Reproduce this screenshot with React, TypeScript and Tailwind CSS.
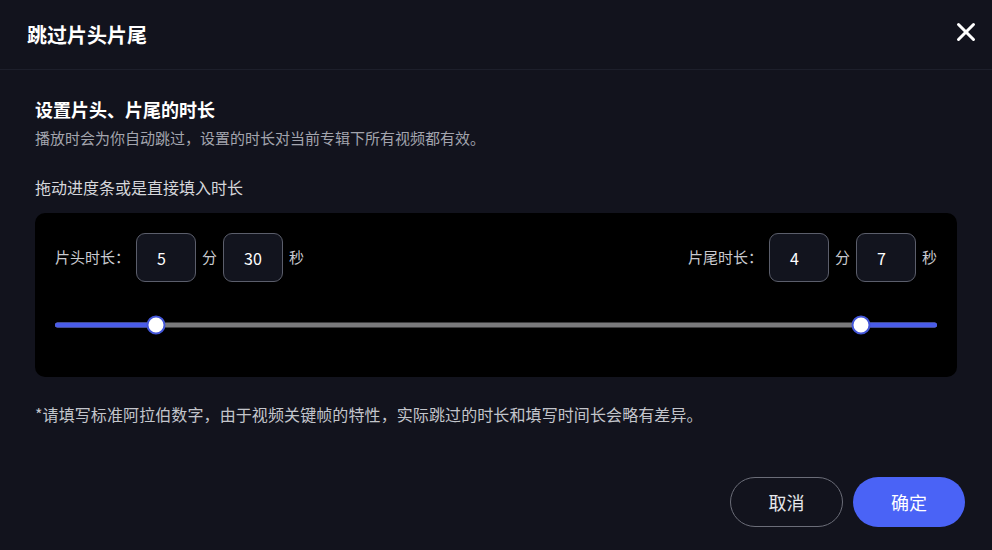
import { X } from "lucide-react";

const TOTAL_SECONDS = 2880;

interface TimeInputProps {
  label: string;
  minutes: number;
  seconds: number;
}

function TimeInput({ label, minutes, seconds }: TimeInputProps) {
  return (
    <div className="flex items-center gap-[6px] text-[15px] text-[#c9cacf]">
      <span>{label}</span>
      <div className="flex h-[49px] w-[60px] items-center rounded-[9px] border border-[#5b5e6b] bg-[#12141e] pl-5 text-[16px] text-white">
        {minutes}
      </div>
      <span>分</span>
      <div className="flex h-[49px] w-[60px] items-center rounded-[9px] border border-[#5b5e6b] bg-[#12141e] pl-5 text-[16px] text-white">
        {seconds}
      </div>
      <span>秒</span>
    </div>
  );
}

export default function App() {
  const head = 5 * 60 + 30;
  const tail = 4 * 60 + 7;
  const headPct = (head / TOTAL_SECONDS) * 100;
  const tailPct = 100 - (tail / TOTAL_SECONDS) * 100;

  return (
    <div
      className="flex h-[550px] w-full flex-col bg-[#12131d]"
      style={{ fontFamily: '"Noto Sans CJK SC", "Noto Sans", sans-serif' }}
    >
      {/* header */}
      <div className="flex h-[70px] shrink-0 items-center justify-between border-b border-[#1d1f2b] pl-[27px] pr-[11px]">
        <h1 className="text-[20px] font-bold text-white">跳过片头片尾</h1>
        <X className="-mt-[6px] h-[30px] w-[30px] text-white" strokeWidth={2.4} />
      </div>

      <div className="flex flex-1 flex-col px-[35px]">
        <h2 className="mt-[27px] text-[18px] leading-6 font-bold text-white">设置片头、片尾的时长</h2>
        <p className="mt-[7px] text-[15px] leading-5 text-[#a3a5ae]">
          播放时会为你自动跳过，设置的时长对当前专辑下所有视频都有效。
        </p>
        <p className="mt-[28px] text-[16px] leading-[22px] text-[#d6d7db]">拖动进度条或是直接填入时长</p>

        <div className="mt-[15px] flex h-[164px] flex-col rounded-[10px] bg-black px-5 pt-5">
          <div className="flex items-center justify-between">
            <TimeInput label="片头时长：" minutes={5} seconds={30} />
            <TimeInput label="片尾时长：" minutes={4} seconds={7} />
          </div>

          <div className="relative mt-[33px] h-5">
            <div className="absolute top-1/2 left-0 h-[5px] w-full -translate-y-1/2 rounded-full bg-[#7a7a7c]" />
            <div
              className="absolute top-1/2 left-0 h-[5px] -translate-y-1/2 rounded-full bg-[#4a5ce8]"
              style={{ width: `${headPct}%` }}
            />
            <div
              className="absolute top-1/2 right-0 h-[5px] -translate-y-1/2 rounded-full bg-[#4a5ce8]"
              style={{ width: `${100 - tailPct}%` }}
            />
            <div
              className="absolute top-1/2 h-[19px] w-[19px] -translate-x-1/2 -translate-y-1/2 rounded-full border-2 border-[#4356d8] bg-white"
              style={{ left: `${headPct}%` }}
            />
            <div
              className="absolute top-1/2 h-[19px] w-[19px] -translate-x-1/2 -translate-y-1/2 rounded-full border-2 border-[#4356d8] bg-white"
              style={{ left: `${tailPct}%` }}
            />
          </div>
        </div>

        <p className="mt-[26px] text-[16px] leading-[22px] tracking-[0.1px] text-[#c3c5cb]">
          *请填写标准阿拉伯数字，由于视频关键帧的特性，实际跳过的时长和填写时间长会略有差异。
        </p>

        <div className="mt-auto mb-[23px] flex justify-end gap-[10px] -mr-[8px]">
          <button className="h-[50px] w-[113px] rounded-full border border-[#6b6d78] text-[18px] text-[#e6e7ea]">
            取消
          </button>
          <button className="h-[50px] w-[112px] rounded-full bg-[#4a63f6] text-[18px] text-white">确定</button>
        </div>
      </div>
    </div>
  );
}
